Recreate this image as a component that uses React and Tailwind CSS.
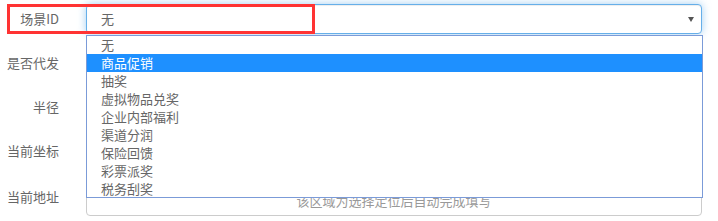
import React from 'react';

const options = ['无', '商品促销', '抽奖', '虚拟物品兑奖', '企业内部福利', '渠道分润', '保险回馈', '彩票派奖', '税务刮奖'];

const font = { fontFamily: '"Microsoft YaHei", "Noto Sans CJK SC", "Liberation Sans", sans-serif' };

function Row({ label, children, className = '' }) {
  return (
    <div className={`flex items-center gap-[27px] pr-[16px] ${className}`}>
      <label className="w-[59px] shrink-0 text-right text-[13px] text-[#666]">{label}</label>
      <div className="flex-1">{children}</div>
    </div>
  );
}

export default function App() {
  return (
    <div className="relative w-[718px] h-[221px] overflow-hidden bg-white" style={font}>
      <form className="flex flex-col pt-[4px]">
        <Row label="场景ID" className="h-[30px] mb-[14px]">
          <div className="relative h-[30px] rounded-[4px] border border-[#66afe9] bg-white shadow-[inset_0_1px_1px_rgba(0,0,0,0.075),0_0_8px_rgba(102,175,233,0.6)]">
            <span className="absolute left-[14px] top-[6px] text-[13px] leading-[16px] text-[#666]">无</span>
            <span className="absolute right-[7px] top-[12px] h-0 w-0 border-x-[3.5px] border-t-[5px] border-x-transparent border-t-[#555]" />
          </div>
        </Row>
        <Row label="是否代发" className="h-[30px] mb-[14px]">
          <div className="h-[30px] rounded-[4px] border border-[#ccc]" />
        </Row>
        <Row label="半径" className="h-[30px] mb-[14px]">
          <div className="h-[30px] rounded-[4px] border border-[#ccc]" />
        </Row>
        <Row label="当前坐标" className="h-[30px] mb-[14px]">
          <div className="h-[30px] rounded-[4px] border border-[#ccc]" />
        </Row>
        <div className="flex items-start gap-[27px] pr-[16px]">
          <label className="w-[59px] shrink-0 pt-[8px] text-right text-[13px] leading-[18px] text-[#666]">当前地址</label>
          <textarea
            readOnly
            placeholder="该区域为选择定位后自动完成填写"
            className="h-[36px] flex-1 resize-none rounded-[4px] border border-[#ccc] px-3 pt-[12px] text-center text-[13px] leading-[16px] placeholder:text-[#999]"
          />
        </div>
      </form>

      <ul className="absolute left-[86px] top-[35px] w-[617px] h-[163px] border border-[#7b9bd8] bg-white">
        {options.map((o, i) => (
          <li
            key={o}
            className={`h-[18px] pl-[14px] text-[13px] leading-[18px] ${i === 1 ? 'bg-[#1e90ff] text-white' : 'text-[#666]'}`}
          >
            {o}
          </li>
        ))}
      </ul>

      <div className="pointer-events-none absolute left-[7px] top-[4px] h-[30px] w-[308px] border-[3px] border-[#ff3333]" />
    </div>
  );
}
